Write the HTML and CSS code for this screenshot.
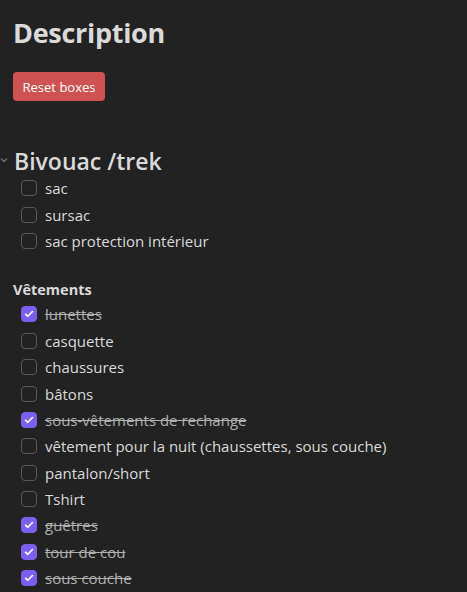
FILE: index.html
```html
<!DOCTYPE html>
<html lang="fr">
<head>
<meta charset="utf-8">
<link rel="stylesheet" href="styles.css">
</head>
<body>
<div class="page">
  <h1 class="title">Description</h1>
  <button class="reset">Reset boxes</button>
  <h2 class="heading"><span class="chev"><svg width="8" height="6" viewBox="0 0 8 6"><path d="M1 1.5 L4 4.5 L7 1.5" fill="none" stroke="#6f6f6f" stroke-width="1.3"/></svg></span>Bivouac /trek</h2>
  <ul class="list">
    <li class="item"><span class="box"></span><span class="txt">sac</span></li>
    <li class="item"><span class="box"></span><span class="txt">sursac</span></li>
    <li class="item"><span class="box"></span><span class="txt">sac protection intérieur</span></li>
  </ul>
  <p class="sub">Vêtements</p>
  <ul class="list">
    <li class="item done"><span class="box"><svg width="10" height="8" viewBox="0 0 10 8"><path d="M1.5 4.2 L3.8 6.3 L8.5 1.5" fill="none" stroke="#fff" stroke-width="1.6" stroke-linecap="round" stroke-linejoin="round"/></svg></span><span class="txt">lunettes</span></li>
    <li class="item"><span class="box"></span><span class="txt">casquette</span></li>
    <li class="item"><span class="box"></span><span class="txt">chaussures</span></li>
    <li class="item"><span class="box"></span><span class="txt">bâtons</span></li>
    <li class="item done"><span class="box"><svg width="10" height="8" viewBox="0 0 10 8"><path d="M1.5 4.2 L3.8 6.3 L8.5 1.5" fill="none" stroke="#fff" stroke-width="1.6" stroke-linecap="round" stroke-linejoin="round"/></svg></span><span class="txt">sous-vêtements de rechange</span></li>
    <li class="item"><span class="box"></span><span class="txt">vêtement pour la nuit (chaussettes, sous couche)</span></li>
    <li class="item"><span class="box"></span><span class="txt">pantalon/short</span></li>
    <li class="item"><span class="box"></span><span class="txt">Tshirt</span></li>
    <li class="item done"><span class="box"><svg width="10" height="8" viewBox="0 0 10 8"><path d="M1.5 4.2 L3.8 6.3 L8.5 1.5" fill="none" stroke="#fff" stroke-width="1.6" stroke-linecap="round" stroke-linejoin="round"/></svg></span><span class="txt">guêtres</span></li>
    <li class="item done"><span class="box"><svg width="10" height="8" viewBox="0 0 10 8"><path d="M1.5 4.2 L3.8 6.3 L8.5 1.5" fill="none" stroke="#fff" stroke-width="1.6" stroke-linecap="round" stroke-linejoin="round"/></svg></span><span class="txt">tour de cou</span></li>
    <li class="item done"><span class="box"><svg width="10" height="8" viewBox="0 0 10 8"><path d="M1.5 4.2 L3.8 6.3 L8.5 1.5" fill="none" stroke="#fff" stroke-width="1.6" stroke-linecap="round" stroke-linejoin="round"/></svg></span><span class="txt">sous couche</span></li>
  </ul>
</div>
</body>
</html>
```
FILE: styles.css
```css
html, body {
  margin: 0;
  padding: 0;
  background: #222222;
}
body {
  font-family: "Open Sans", "Noto Sans", sans-serif;
  color: #dadada;
  width: 467px;
  height: 592px;
  overflow: hidden;
}
.page {
  padding: 14px 0 0 13px;
}
.title {
  margin: 0;
  font-size: 27px;
  line-height: 38px;
  font-weight: 700;
  color: #dadada;
  letter-spacing: -0.3px;
}
.reset {
  display: block;
  margin-top: 20px;
  width: 92px;
  height: 29px;
  border: none;
  border-radius: 4px;
  background: #cf5252;
  color: #ffffff;
  font-family: inherit;
  font-size: 13px;
  padding: 0;
}
.heading {
  position: relative;
  margin: 46px 0 0 1px;
  font-size: 23px;
  line-height: 28px;
  font-weight: 600;
  color: #dadada;
}
.chev {
  position: absolute;
  left: -14px;
  top: 10px;
  display: flex;
}
.list {
  list-style: none;
  margin: 0;
  padding: 0 0 0 8px;
}
.item {
  display: flex;
  align-items: center;
  height: 26.4px;
  font-size: 15px;
}
.box {
  width: 14px;
  height: 14px;
  border: 1px solid #5a5a5a;
  border-radius: 4px;
  margin-right: 8px;
  display: flex;
  align-items: center;
  justify-content: center;
  flex-shrink: 0;
}
.done .box {
  background: #7b5ff0;
  border-color: #7b5ff0;
}
.done .txt {
  text-decoration: line-through;
  color: #b0b0b0;
}
.sub {
  margin: 25px 0 0 0;
  font-size: 14.5px;
  line-height: 22px;
  font-weight: 700;
}
```
